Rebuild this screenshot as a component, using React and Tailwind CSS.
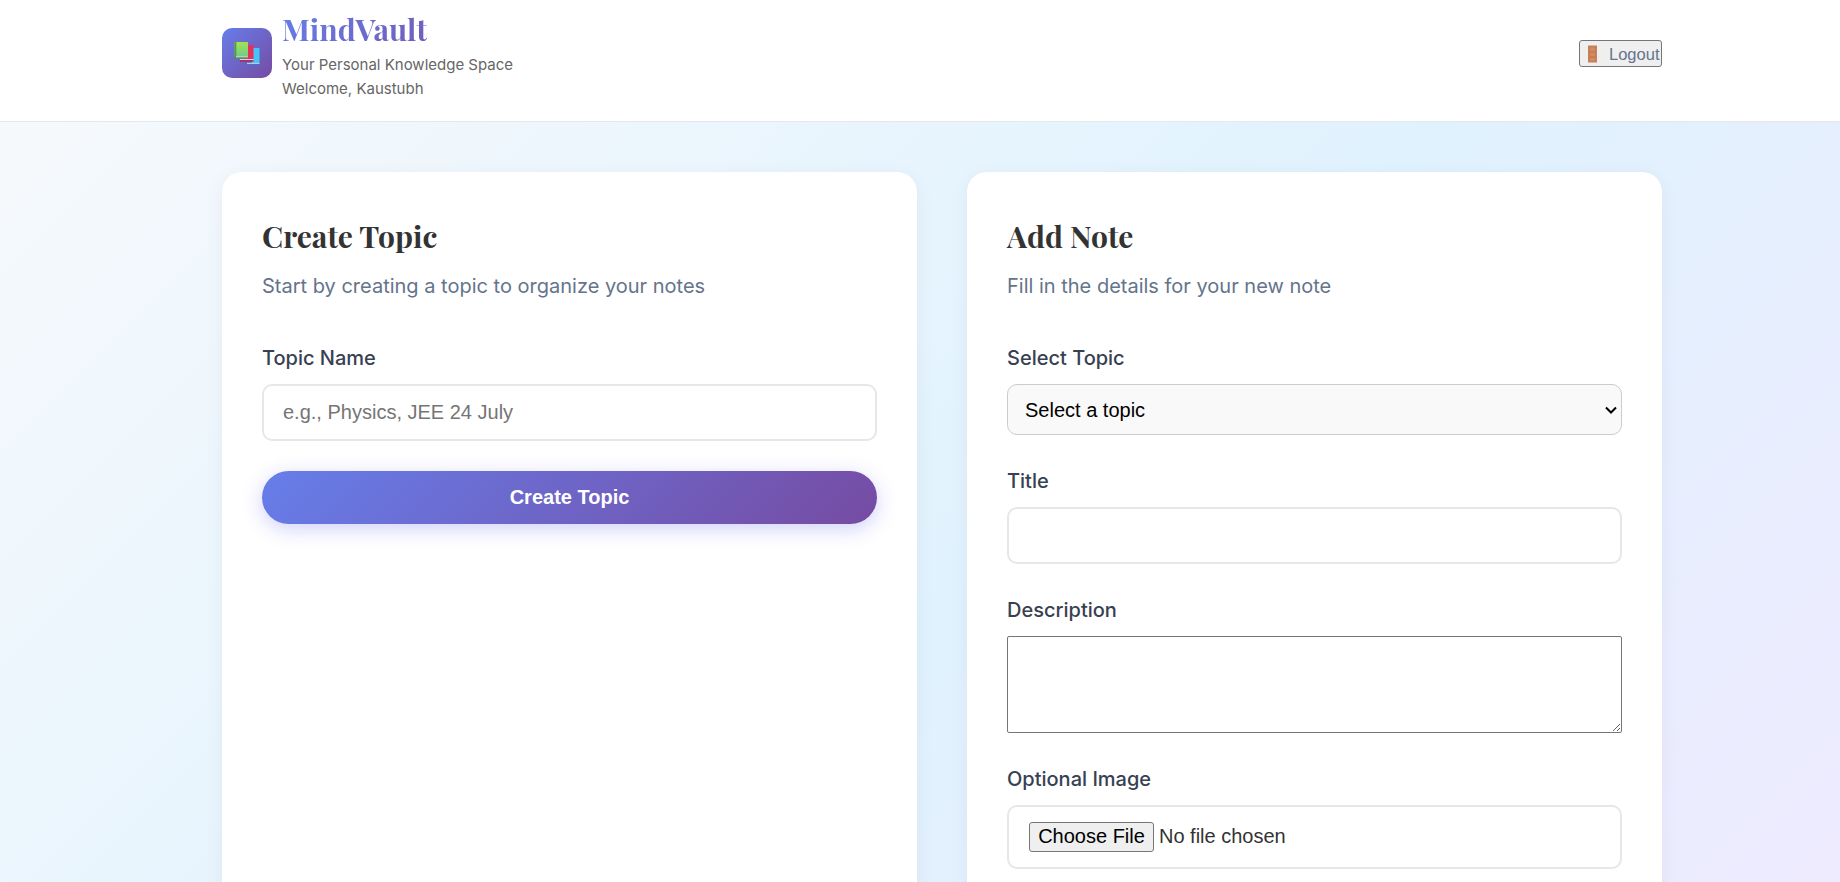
const field = "block w-full rounded-[10px] border-2 border-[#e5e7eb] bg-white font-['Liberation_Sans',Arial,sans-serif] text-[20px]";

function Books() {
  return (
    <svg width="26" height="26" viewBox="0 0 26 26">
      <defs>
        <linearGradient id="cover" x1="0" y1="0" x2="0" y2="1">
          <stop offset="0" stopColor="#a5e052" />
          <stop offset="1" stopColor="#6fce88" />
        </linearGradient>
      </defs>
      <rect x="16" y="8" width="9.500" height="15" rx=".5" fill="#45c4f5" />
      <rect x="16" y="8" width="2" height="15" fill="#1f8fd0" />
      <rect x="13" y="22.800" width="12.500" height="1.200" fill="#b9c8e8" />
      <rect x="12" y="24" width="13.500" height="1" fill="#3a78c8" />
      <rect x="10" y="5" width="9.500" height="14.500" rx=".5" fill="#e6305c" />
      <rect x="6" y="19" width="13.500" height="1.200" fill="#d9d3e2" />
      <rect x="6" y="20.200" width="13.500" height="1.400" fill="#b01f50" />
      <rect x="0.500" y="2" width="13.500" height="14.500" rx=".6" fill="url(#cover)" />
      <rect x="0.500" y="2" width="1.800" height="16.500" rx=".6" fill="#4f9a45" />
      <rect x="2" y="16.300" width="12" height="1.200" fill="#dde3dc" />
      <rect x="1" y="17.500" width="13" height="1.300" fill="#4f9a45" />
    </svg>
  );
}

function Door() {
  return (
    <svg width="9" height="18" viewBox="0 0 9 18">
      <rect y="0.500" width="9" height="17" fill="#cb8059" />
      <path d="M1.500 2h6v4.500h-6zM1.500 7.500h6v4h-6zM1.500 12.500h6v4h-6z" fill="#d48a60" stroke="#c0764f" strokeWidth=".6" />
    </svg>
  );
}

function Card({ title, subtitle, children }) {
  return (
    <section className="h-[1000px] rounded-[20px] bg-white px-10 pt-[44px] shadow-[0_4px_20px_rgba(0,0,0,0.05)]">
      <h2 className="h-10 whitespace-nowrap font-['Playfair_Display',serif] text-[30px] leading-10 font-bold text-[#333]">{title}</h2>
      <p className="mt-[14px] text-[20px] leading-8 text-[#64748b]">{subtitle}</p>
      {children}
    </section>
  );
}

function Label({ children }) {
  return <label className="mb-[10px] block text-[20px] leading-8 font-medium text-[#374151]">{children}</label>;
}

export default function App() {
  return (
    <div className="h-[882px] overflow-hidden">
      <div className="h-[1280px] bg-[linear-gradient(135deg,#f8fafc_0%,#e0f2fe_50%,#f3e8ff_100%)] font-['Inter',sans-serif] text-[#333]">
        <header className="h-[122px] border-b border-[#e2e8f0] bg-white">
          <div className="ml-[222px] flex w-[1440px] items-start justify-between">
            <div className="flex">
              <div className="mt-7 flex size-[50px] items-center justify-center rounded-[10px] bg-linear-[135deg,#667eea,#764ba2]">
                <Books />
              </div>
              <div className="ml-[10px] pt-[9px]">
                <h1 className="h-11 bg-linear-[135deg,#667eea,#764ba2] bg-clip-text font-['Playfair_Display',serif] text-[30px] leading-10 font-bold text-transparent">MindVault</h1>
                <p className="text-[15px] leading-6 text-[#666]">Your Personal Knowledge Space</p>
                <p className="text-[15px] leading-6 text-[#666]">Welcome, Kaustubh</p>
              </div>
            </div>
            <button className="mt-10 flex h-[27px] w-[83px] items-center rounded-[3px] border border-[#767676] bg-[#efefef] pl-2 font-['Liberation_Sans',Arial,sans-serif] text-[16.5px] text-[#64748b]">
              <Door />
              <span className="ml-3 pt-px">Logout</span>
            </button>
          </div>
        </header>
        <main className="ml-[222px] grid w-[1440px] grid-cols-2 gap-[50px] pt-[50px]">
          <Card title="Create Topic" subtitle="Start by creating a topic to organize your notes">
            <div className="mt-10">
              <Label>Topic Name</Label>
              <input className={field + " h-[57px] px-[19px] placeholder:text-[#757575]"} placeholder="e.g., Physics, JEE 24 July" />
            </div>
            <button className="mt-[30px] h-[53px] w-full rounded-full bg-linear-[135deg,#667eea,#764ba2] pb-0.5 font-['Liberation_Sans',Arial,sans-serif] text-[20px] font-bold text-white shadow-[0_5px_20px_rgba(99,102,241,0.3)]">Create Topic</button>
          </Card>
          <Card title="Add Note" subtitle="Fill in the details for your new note">
            <div className="mt-10">
              <Label>Select Topic</Label>
              <div className="flex h-[51px] items-center justify-between rounded-[10px] border border-[#ccc] bg-[#f9f9f9] pr-1 pl-[17px] font-['Liberation_Sans',Arial,sans-serif] text-[20px] text-black">
                <span>Select a topic</span>
                <svg width="12" height="8" viewBox="0 0 12 8"><path d="M1 1.500 6 6.500 11 1.500" fill="none" stroke="#000" strokeWidth="2" /></svg>
              </div>
            </div>
            <div className="mt-[30px]">
              <Label>Title</Label>
              <input className={field + " h-[57px]"} />
            </div>
            <div className="mt-[30px]">
              <Label>Description</Label>
              <textarea className="block h-[97px] w-full resize rounded-[2px] border border-[#767676] bg-white" />
            </div>
            <div className="mt-[30px]">
              <Label>Optional Image</Label>
              <div className={field + " flex h-16 items-center pb-px pl-5"}>
                <button className="h-[30px] w-[125px] rounded-[3px] border border-[#767676] bg-[#efefef] pb-0.5 leading-6 whitespace-nowrap text-black">Choose File</button>
                <span className="ml-[5px] pb-0.5">No file chosen</span>
              </div>
            </div>
          </Card>
        </main>
      </div>
    </div>
  );
}
